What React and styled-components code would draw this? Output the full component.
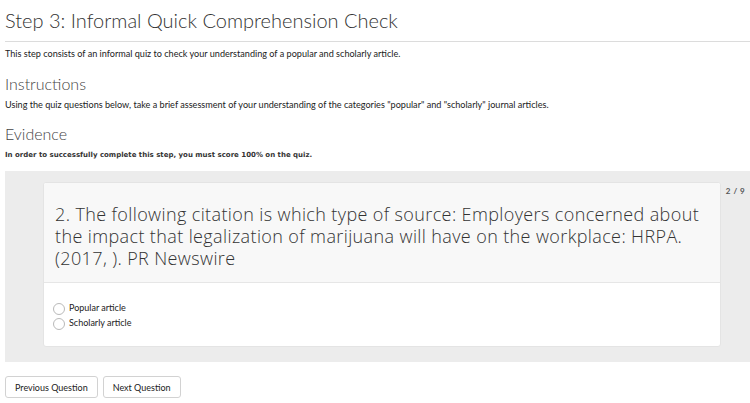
import React, {useState} from 'react'
import styled, {createGlobalStyle} from 'styled-components'

const GlobalStyle = createGlobalStyle`
  body {
    margin: 0;
    background: #fff;
    font-family: Lato, "Liberation Sans", sans-serif;
    color: #222;
  }
`

const Page = styled.div`
  padding: 0 0 0 5px;
  width: 745px;
`

const Title = styled.h1`
  margin: 8px 0 0;
  font-size: 20px;
  line-height: 24px;
  font-weight: 300;
  color: #333;
`

const Rule = styled.hr`
  margin: 9px 0 0;
  border: 0;
  border-top: 1px solid #dcdcdc;
`

const Heading = styled.h2`
  margin: ${p => p.$top}px 0 0;
  font-size: 16px;
  line-height: 20px;
  font-weight: 300;
  color: #444;
`

const Text = styled.p`
  margin: ${p => p.$top}px 0 0;
  font-size: 9.1px;
  line-height: 12px;
  color: #222;
`

const Note = styled.p`
  margin: 6px 0 0;
  font-family: "DejaVu Sans", sans-serif;
  font-size: 7px;
  line-height: 10px;
  font-weight: 600;
  color: #333;
`

const Panel = styled.div`
  margin-top: 11px;
  background: #ececec;
  display: grid;
  grid-template-columns: 1fr 29px;
  padding: 11px 0 15px 38px;
`

const Card = styled.div`
  background: #fff;
  border: 1px solid #e4e4e4;
  border-radius: 3px;
  overflow: hidden;
`

const CardHead = styled.div`
  background: #f8f8f8;
  border-bottom: 1px solid #e6e6e6;
  padding: 20px 11px 13px;
  font-family: "Open Sans", Lato, sans-serif;
  font-size: 18px;
  font-weight: 300;
  letter-spacing: 0.38px;
  line-height: 22px;
  color: #333;
`

const CardBody = styled.div`
  padding: 17px 9px 16px;
  display: flex;
  flex-direction: column;
`

const Option = styled.label`
  display: flex;
  align-items: center;
  gap: 4px;
  height: 15px;
  font-size: 9px;
  color: #222;
  cursor: pointer;
`

const Radio = styled.span`
  width: 10px;
  height: 10px;
  border-radius: 50%;
  border: 1px solid ${p => (p.$on ? '#5a8dd6' : '#b9b9b9')};
  background: ${p => (p.$on ? 'radial-gradient(circle, #5a8dd6 3px, #fff 3.5px)' : '#fff')};
  margin-top: 2px;
`

const Counter = styled.div`
  font-size: 8px;
  font-weight: 700;
  color: #555;
  text-align: center;
  padding-top: 4px;
  letter-spacing: 0.5px;
`

const Buttons = styled.div`
  margin-top: 14px;
  display: flex;
  gap: 5px;
`

const Button = styled.button`
  height: 22px;
  padding: 0 ${p => p.$pad}px;
  background: #fff;
  border: 1px solid #d2d2d2;
  border-radius: 3px;
  font-family: Lato, "Liberation Sans", sans-serif;
  font-size: 9px;
  color: #222;
  cursor: pointer;
`

const options = ['Popular article', 'Scholarly article']

const App = () => {
  const [picked, setPicked] = useState(null)

  return (
    <Page>
      <GlobalStyle />
      <Title>Step 3: Informal Quick Comprehension Check</Title>
      <Rule />
      <Text $top={6}>This step consists of an informal quiz to check your understanding of a popular and scholarly article.</Text>

      <Heading $top={14}>Instructions</Heading>
      <Text $top={5}>Using the quiz questions below, take a brief assessment of your understanding of the categories "popular" and "scholarly" journal articles.</Text>

      <Heading $top={13}>Evidence</Heading>
      <Note>In order to successfully complete this step, you must score 100% on the quiz.</Note>

      <Panel>
        <Card>
          <CardHead>
            2. The following citation is which type of source: Employers concerned about the impact that legalization of marijuana will have on the workplace: HRPA. (2017, ). PR Newswire
          </CardHead>
          <CardBody>
            {options.map((o, i) => (
              <Option key={o} onClick={() => setPicked(i)}>
                <Radio $on={picked === i} />
                {o}
              </Option>
            ))}
          </CardBody>
        </Card>
        <Counter>2 / 9</Counter>
      </Panel>

      <Buttons>
        <Button $pad={9}>Previous Question</Button>
        <Button $pad={9}>Next Question</Button>
      </Buttons>
    </Page>
  )
}

export default App
